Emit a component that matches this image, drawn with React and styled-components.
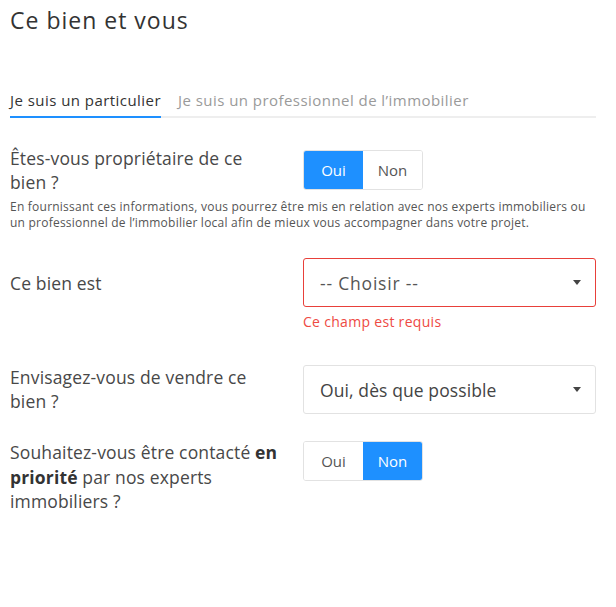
import React from 'react';
import styled, { createGlobalStyle } from 'styled-components';

const GlobalStyle = createGlobalStyle`
  body {
    margin: 0;
    background: #fff;
    font-family: "Open Sans", "Liberation Sans", sans-serif;
    color: #444;
  }
`;

const App = () => {
  return (
    <Page>
      <GlobalStyle />
      <Title>Ce bien et vous</Title>

      <Tabs>
        <Tab $active>Je suis un particulier</Tab>
        <Tab>Je suis un professionnel de l’immobilier</Tab>
      </Tabs>

      <Row $top={28}>
        <Label>Êtes-vous propriétaire de ce bien ?</Label>
        <Toggle $offset={4}>
          <ToggleButton $selected>Oui</ToggleButton>
          <ToggleButton>Non</ToggleButton>
        </Toggle>
      </Row>
      <Help>
        En fournissant ces informations, vous pourrez être mis en relation avec nos experts immobiliers ou
        un professionnel de l’immobilier local afin de mieux vous accompagner dans votre projet.
      </Help>

      <Row $top={27} $center>
        <Label>Ce bien est</Label>
        <Select $error>
          <SelectText $placeholder>-- Choisir --</SelectText>
          <Caret />
        </Select>
      </Row>
      <ErrorRow>
        <span />
        <ErrorText>Ce champ est requis</ErrorText>
      </ErrorRow>

      <Row $top={34}>
        <Label>Envisagez-vous de vendre ce bien ?</Label>
        <Select>
          <SelectText>Oui, dès que possible</SelectText>
          <Caret />
        </Select>
      </Row>

      <Row $top={26}>
        <Label $lh={24.5}>
          Souhaitez-vous être contacté <strong>en priorité</strong> par nos experts immobiliers ?
        </Label>
        <Toggle $offset={1}>
          <ToggleButton>Oui</ToggleButton>
          <ToggleButton $selected>Non</ToggleButton>
        </Toggle>
      </Row>
    </Page>
  );
};

const Page = styled.div`
  padding: 0 20px 40px 10px;
  width: 586px;
`;

const Title = styled.h1`
  margin: 5px 0 0;
  font-size: 23px;
  line-height: 30px;
  font-weight: 400;
  color: #333;
  letter-spacing: 1px;
`;

const Tabs = styled.div`
  display: flex;
  gap: 17px;
  margin-top: 55px;
  border-bottom: 2px solid #eeeeee;
`;

const Tab = styled.div`
  font-size: 15px;
  line-height: 20px;
  letter-spacing: 0.45px;
  padding-bottom: 6px;
  margin-bottom: -2px;
  color: ${props => props.$active ? '#333' : '#9a9a9a'};
  border-bottom: 2px solid ${props => props.$active ? '#1e90ff' : 'transparent'};
`;

const Row = styled.div`
  display: grid;
  grid-template-columns: 283px 1fr;
  column-gap: 10px;
  align-items: ${props => props.$center ? 'center' : 'start'};
  margin-top: ${props => props.$top}px;
`;

const Label = styled.div`
  max-width: 270px;
  font-size: 17.5px;
  line-height: ${props => props.$lh || 24}px;
  letter-spacing: 0.15px;
  color: #484848;

  strong {
    font-weight: 700;
    color: #333;
  }
`;

const Toggle = styled.div`
  display: flex;
  margin-top: ${props => props.$offset}px;
  width: 120px;
  height: 40px;
  border: 1px solid #e2e2e2;
  border-radius: 3px;
  box-sizing: border-box;
  overflow: hidden;
`;

const ToggleButton = styled.div`
  flex: 1;
  display: flex;
  align-items: center;
  justify-content: center;
  font-size: 15px;
  background: ${props => props.$selected ? '#1e90ff' : '#fff'};
  color: ${props => props.$selected ? '#fff' : '#555'};
`;

const Help = styled.p`
  margin: 5px 0 0;
  font-size: 12px;
  line-height: 16px;
  letter-spacing: 0.23px;
  color: #555;
`;

const Select = styled.div`
  display: flex;
  align-items: center;
  height: 49px;
  box-sizing: border-box;
  padding: 0 16px;
  border: 1px solid ${props => props.$error ? '#e8403a' : '#e2e2e2'};
  border-radius: 3px;
  background: #fff;
`;

const SelectText = styled.span`
  flex: 1;
  font-size: 17.5px;
  letter-spacing: ${props => props.$placeholder ? '0.8px' : '0.1px'};
  color: ${props => props.$placeholder ? '#555' : '#444'};
`;

const Caret = styled.span`
  width: 0;
  height: 0;
  border-left: 4px solid transparent;
  border-right: 4px solid transparent;
  border-top: 5px solid #444;
  margin-right: -2px;
`;

const ErrorRow = styled.div`
  display: grid;
  grid-template-columns: 283px 1fr;
  column-gap: 10px;
  margin-top: 6px;
`;

const ErrorText = styled.div`
  font-size: 14px;
  line-height: 18px;
  letter-spacing: 0.3px;
  color: #ee4a43;
`;

export default App;
